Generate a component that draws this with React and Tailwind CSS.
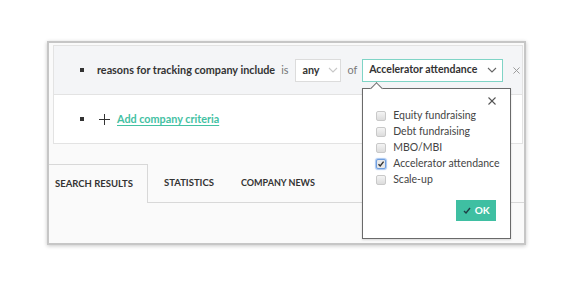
import React from "react";

function Chevron({ color = "#bbb", className = "" }) {
  return (
    <svg width="10" height="6" viewBox="0 0 10 6" className={"shrink-0 " + className}>
      <polyline points="1,1 5,5 9,1" fill="none" stroke={color} strokeWidth="1.1" />
    </svg>
  );
}

function Cross({ color = "#999", size = 8 }) {
  return (
    <svg width={size} height={size} viewBox="0 0 8 8">
      <line x1="0.5" y1="0.5" x2="7.5" y2="7.5" stroke={color} strokeWidth="1.1" />
      <line x1="7.5" y1="0.5" x2="0.5" y2="7.5" stroke={color} strokeWidth="1.1" />
    </svg>
  );
}

function Checkbox({ checked }) {
  return (
    <div
      className={
        "shrink-0 w-[10px] h-[10px] rounded-[2px] border flex items-center justify-center " +
        (checked
          ? "border-[#6f9fe0] bg-[#e8e8e8] shadow-[0_0_1px_1px_rgba(110,160,230,0.6)]"
          : "border-[#c9c9c9] bg-gradient-to-b from-[#f4f4f4] to-[#dcdcdc]")
      }
    >
      {checked && (
        <svg width="8" height="8" viewBox="0 0 8 8">
          <polyline points="1.5,4.2 3.2,6 6.6,1.6" fill="none" stroke="#333" strokeWidth="1.4" />
        </svg>
      )}
    </div>
  );
}

const items = [
  ["Equity fundraising", false],
  ["Debt fundraising", false],
  ["MBO/MBI", false],
  ["Accelerator attendance", true],
  ["Scale-up", false],
];

export default function App() {
  return (
    <div className="w-[575px] h-[288px] bg-white pt-[41px] pl-[47px] font-['Lato','Noto_Sans',sans-serif] text-[#333] whitespace-nowrap">
      <div className="relative w-[479px] h-[204px] border-2 border-[#c6c6c6] bg-[#fafafa] shadow-[0_1px_4px_rgba(0,0,0,0.22)] pt-[2px]">
        <div className="ml-[4px] mr-[1px] border border-[#e3e3e3]">
          <div className="h-[48px] bg-[#f4f5f7] flex items-center pl-[26px]">
            <div className="shrink-0 w-[4px] h-[4px] bg-[#333]" />
            <span className="shrink-0 ml-[13px] text-[10.8px] font-bold text-[#333]">
              reasons for tracking company include
            </span>
            <span className="shrink-0 ml-[6px] text-[10.8px] text-[#777]">is</span>
            <div className="shrink-0 ml-[7px] w-[46px] h-[23px] border border-[#dcdcdc] bg-white flex items-center pl-[6px]">
              <span className="text-[10.8px] font-bold text-[#333]">any</span>
              <Chevron color="#c8c8c8" className="ml-[8px]" />
            </div>
            <span className="shrink-0 ml-[6px] text-[10.8px] text-[#777]">of</span>
            <div className="shrink-0 relative ml-[5px]">
              <div className="w-[141px] h-[23px] border border-[#7fd4c6] bg-white flex items-center pl-[6px]">
                <span className="text-[10.5px] font-bold text-[#333]">Accelerator attendance</span>
                <Chevron color="#666" className="ml-[10px]" />
              </div>
              <div className="absolute left-0 top-[29px] w-[149px] h-[151px] border border-[#6a6a6a] bg-white z-10 shadow-[0_1px_2px_rgba(0,0,0,0.15)]">
                <div className="absolute left-[9px] top-[-5px] w-[9px] h-[9px] rotate-45 bg-white border-t border-l border-[#6a6a6a]" />
                <div className="absolute right-[14px] top-[8px]">
                  <Cross color="#555" size={8} />
                </div>
                <div className="pt-[19px] pl-[13px] flex flex-col">
                  {items.map(([label, checked]) => (
                    <div key={label} className="h-[16px] flex items-center">
                      <Checkbox checked={checked} />
                      <span className="ml-[7px] text-[10.5px] text-[#444]">{label}</span>
                    </div>
                  ))}
                </div>
                <div className="absolute right-[14px] bottom-[17px] w-[40px] h-[21px] bg-[#3fbfa2] flex items-center justify-center">
                  <svg width="8" height="7" viewBox="0 0 8 7">
                    <polyline points="1,4 3,6 7,1" fill="none" stroke="#1e3f46" strokeWidth="1.4" />
                  </svg>
                  <span className="ml-[4px] text-[10px] font-bold text-white">OK</span>
                </div>
              </div>
            </div>
            <div className="shrink-0 ml-[10px]">
              <Cross color="#999" size={7} />
            </div>
          </div>
          <div className="h-[49px] bg-white border-t border-[#e3e3e3] flex items-center pl-[26px]">
            <div className="shrink-0 w-[4px] h-[4px] bg-[#333]" />
            <svg width="11" height="11" viewBox="0 0 11 11" className="ml-[15px] shrink-0">
              <line x1="5.5" y1="0" x2="5.5" y2="11" stroke="#333" strokeWidth="1" />
              <line x1="0" y1="5.5" x2="11" y2="5.5" stroke="#333" strokeWidth="1" />
            </svg>
            <span className="ml-[7px] text-[10.8px] font-bold text-[#43c1a3] underline underline-offset-2">
              Add company criteria
            </span>
          </div>
        </div>
        <div className="mt-[20px] flex h-[39px]">
          <div className="w-[99px] border-t border-r border-[#d8d8d8] flex items-center pl-[6px]">
            <span className="text-[9.5px] font-bold text-[#333]">SEARCH RESULTS</span>
          </div>
          <div className="flex-1 border-b border-[#d8d8d8] flex items-center pl-[16px]">
            <span className="text-[9.5px] font-bold text-[#333]">STATISTICS</span>
            <span className="ml-[27px] text-[9px] font-bold text-[#333]">COMPANY NEWS</span>
          </div>
        </div>
      </div>
    </div>
  );
}
